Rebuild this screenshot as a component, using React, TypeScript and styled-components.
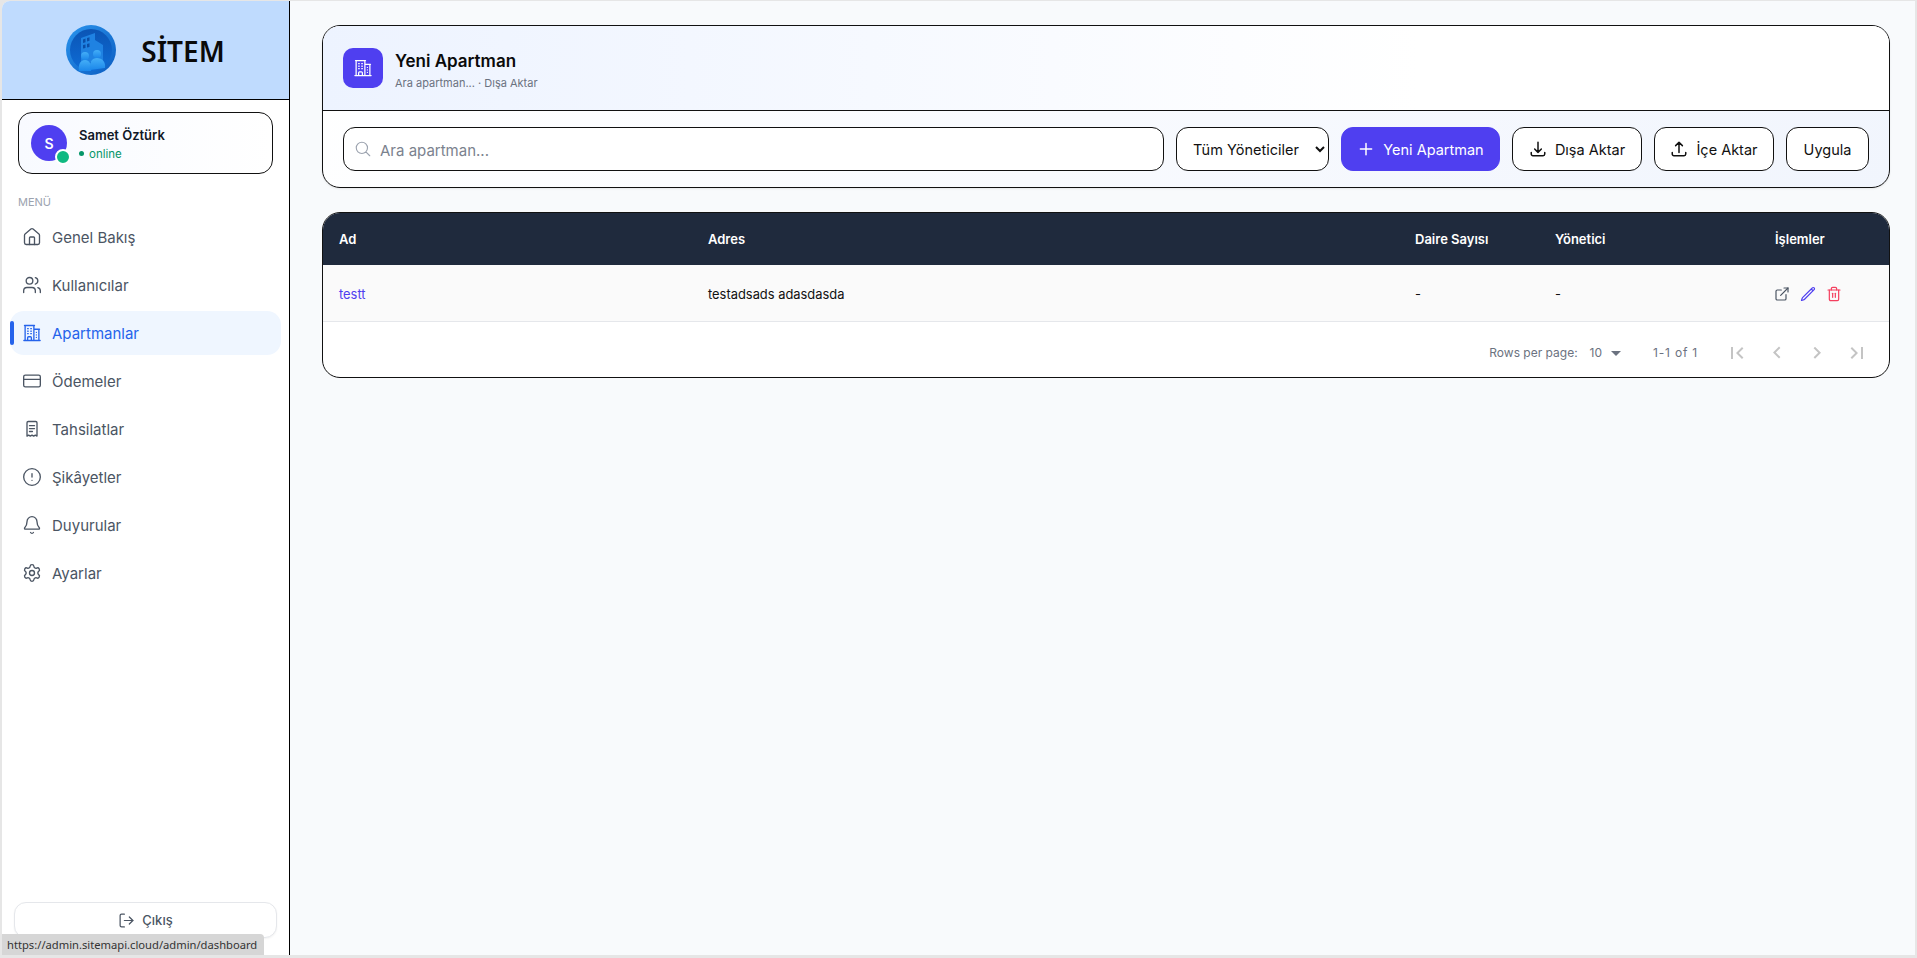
import React from 'react';
import styled, { createGlobalStyle } from 'styled-components';
import { Home, Users, CreditCard, CircleAlert, Bell, Settings, LogOut, ExternalLink, Trash2 } from 'lucide-react';
import {
	HiOutlineBuildingOffice2,
	HiOutlineMagnifyingGlass,
	HiOutlinePlus,
	HiOutlineArrowDownTray,
	HiOutlineArrowUpTray,
	HiOutlinePencil,
} from 'react-icons/hi2';

const GlobalStyle = createGlobalStyle`
	html, body {
		margin: 0;
		height: 100%;
		background: #e6e6e6;
	}
	* {
		box-sizing: border-box;
	}
	body {
		font-family: Inter, 'Noto Sans', sans-serif;
		color: #111827;
		overflow: hidden;
	}
`;

const Shell = styled.div`
	position: relative;
	display: flex;
	height: 958px;
	padding: 1px 2px 3px;
`;

const Sidebar = styled.aside`
	width: 288px;
	flex: none;
	display: flex;
	flex-direction: column;
	background: #fff;
	border-right: 1px solid #000;
	border-top-left-radius: 8px;
	overflow: hidden;
`;

const Brand = styled.div`
	height: 99px;
	flex: none;
	display: flex;
	align-items: center;
	justify-content: center;
	gap: 25px;
	background: #bfdbfe;
	border-bottom: 1px solid #000;
`;

const BrandName = styled.div`
	font-family: 'Noto Sans', sans-serif;
	font-size: 28px;
	font-weight: 600;
	color: #0a0a0a;
	padding-top: 2px;
`;

const UserCard = styled.div`
	margin: 12px 16px 0;
	height: 62px;
	flex: none;
	display: flex;
	align-items: center;
	gap: 12px;
	padding: 0 12px;
	border: 1px solid #111;
	border-radius: 14px;
	background: linear-gradient(90deg, #f8faff, #fff);
`;

const Avatar = styled.div`
	position: relative;
	width: 36px;
	height: 36px;
	flex: none;
	display: flex;
	align-items: center;
	justify-content: center;
	border-radius: 50%;
	background: #4f3ff0;
	color: #fff;
	font-size: 14px;
	font-weight: 600;
`;

const OnlineDot = styled.span`
	position: absolute;
	right: -4px;
	bottom: -4px;
	width: 16px;
	height: 16px;
	border-radius: 50%;
	background: #10b981;
	border: 2px solid #fff;
`;

const UserText = styled.div`
	padding-top: 2px;
`;

const UserName = styled.div`
	font-size: 13px;
	font-weight: 600;
	color: #111827;
	line-height: 18px;
`;

const UserStatus = styled.div`
	display: flex;
	align-items: center;
	gap: 5px;
	font-size: 11.5px;
	color: #059669;
	line-height: 18px;
	margin-top: 1px;

	&:before {
		content: '';
		width: 5px;
		height: 5px;
		border-radius: 50%;
		background: #059669;
	}
`;

const MenuLabel = styled.div`
	margin: 21px 16px 0;
	font-size: 11px;
	line-height: 14px;
	color: #9ca3af;
`;

const Nav = styled.nav`
	display: flex;
	flex-direction: column;
	gap: 4px;
	margin-top: 6px;
	padding: 0 8px;
`;

const NavItem = styled.a<{ $active?: boolean }>`
	position: relative;
	height: 44px;
	display: flex;
	align-items: center;
	gap: 10px;
	padding-left: 12px;
	border-radius: 14px;
	font-size: 15px;
	color: ${(p) => (p.$active ? '#2563eb' : '#4b5563')};
	background: ${(p) => (p.$active ? '#eff6ff' : 'transparent')};

	svg {
		width: 20px;
		height: 20px;
		flex: none;
		stroke-width: 1.6;
	}

	${(p) =>
		p.$active &&
		`&:before {
			content: '';
			position: absolute;
			left: 0;
			top: 10px;
			bottom: 10px;
			width: 4px;
			border-radius: 2px;
			background: #2563eb;
		}`}
`;

const SideFooter = styled.div`
	margin-top: auto;
	padding: 0 12px 17px;
`;

const LogoutButton = styled.button`
	width: 100%;
	height: 36px;
	display: flex;
	align-items: center;
	justify-content: center;
	gap: 7px;
	background: #fff;
	border: 1px solid #e5e7eb;
	border-radius: 12px;
	box-shadow: 0 1px 2px rgba(0, 0, 0, 0.05);
	font: 500 13px Inter, sans-serif;
	color: #4b5563;

	svg {
		width: 17px;
		height: 17px;
		stroke-width: 1.75;
	}
`;

const StatusTip = styled.div`
	position: absolute;
	left: 2px;
	bottom: 3px;
	width: 262px;
	height: 21px;
	padding: 0 5px;
	display: flex;
	align-items: center;
	background: #d6d6d6;
	border-top-right-radius: 4px;
	font-family: 'Noto Sans', sans-serif;
	font-size: 11.2px;
	white-space: nowrap;
	color: #333;
`;

const Main = styled.main`
	flex: 1;
	min-width: 0;
	display: flex;
	flex-direction: column;
	gap: 24px;
	padding: 24px 25px 0 32px;
	background: #f8fafc;
`;

const Panel = styled.section`
	height: 163px;
	flex: none;
	display: flex;
	flex-direction: column;
	border: 1px solid #111;
	border-radius: 18px;
	overflow: hidden;
	background: linear-gradient(135deg, #fff, #f1f5fd);
	box-shadow: 0 1px 2px rgba(0, 0, 0, 0.08);
`;

const PanelHead = styled.div`
	height: 85px;
	flex: none;
	display: flex;
	align-items: center;
	gap: 12px;
	padding: 0 20px;
	background: linear-gradient(90deg, #edf3ff, #ffffff 70%);
	border-bottom: 1px solid #111;
`;

const HeadIcon = styled.div`
	width: 40px;
	height: 40px;
	display: flex;
	align-items: center;
	justify-content: center;
	border-radius: 10px;
	background: #4f3ff0;
	color: #fff;

	svg {
		width: 20px;
		height: 20px;
	}
`;

const HeadText = styled.div`
	padding-top: 4px;
`;

const Title = styled.div`
	font-size: 17px;
	font-weight: 600;
	line-height: 22px;
	color: #0a0a0a;
`;

const Subtitle = styled.div`
	font-size: 11px;
	line-height: 16px;
	margin-top: 3px;
	color: #6b7280;
`;

const Toolbar = styled.div`
	flex: 1;
	display: flex;
	align-items: center;
	gap: 12px;
	padding: 0 20px;
`;

const SearchBox = styled.label`
	flex: 1;
	height: 44px;
	display: flex;
	align-items: center;
	gap: 6px;
	padding: 0 10px;
	background: #fff;
	border: 1px solid #111;
	border-radius: 12px;
	color: #9ca3af;

	svg {
		width: 18px;
		height: 18px;
		flex: none;
	}
`;

const SearchInput = styled.input`
	flex: 1;
	border: none;
	outline: none;
	background: none;
	padding-top: 3px;
	font: 15px Inter, sans-serif;

	&::placeholder {
		color: #7b828e;
	}
`;

const Select = styled.select`
	width: 153px;
	height: 44px;
	flex: none;
	padding: 0 12px;
	background: #fff;
	border: 1px solid #111;
	border-radius: 12px;
	font: 14.5px Inter, sans-serif;
	color: #111;
`;

const Button = styled.button<{ $primary?: boolean; $width: number }>`
	width: ${(p) => p.$width}px;
	height: 44px;
	flex: none;
	display: flex;
	align-items: center;
	justify-content: center;
	gap: 8px;
	padding: 0;
	border-radius: 12px;
	border: 1px solid ${(p) => (p.$primary ? '#4f3ff0' : '#111')};
	background: ${(p) => (p.$primary ? '#4f3ff0' : '#fff')};
	color: ${(p) => (p.$primary ? '#fff' : '#111')};
	font: 400 14.5px Inter, sans-serif;

	svg {
		width: 18px;
		height: 18px;
		stroke-width: 2;
	}
`;

const TableCard = styled.section`
	height: 166px;
	flex: none;
	display: flex;
	flex-direction: column;
	border: 1px solid #111;
	border-radius: 18px;
	overflow: hidden;
	background: #fff;
`;

const Row = styled.div`
	display: grid;
	grid-template-columns: 369px 707px 140px 220px 130px;
	align-items: center;
`;

const HeadRow = styled(Row)`
	height: 52px;
	background: #1f2a3d;
	color: #fff;
	font-size: 13px;
	font-weight: 600;
`;

const BodyRow = styled(Row)`
	height: 57px;
	padding-top: 2px;
	background: #fafafa;
	border-bottom: 1px solid #e5e7eb;
	font-size: 12.9px;
	color: #111;
`;

const Cell = styled.div`
	padding-left: 16px;
`;

const NameLink = styled.a`
	color: #4f3ff0;
`;

const Actions = styled.div`
	display: flex;
	align-items: center;
	gap: 10px;
	padding-left: 15px;

	svg {
		width: 16px;
		height: 16px;
		stroke-width: 1.8;
	}
`;

const Pager = styled.div`
	flex: 1;
	display: flex;
	align-items: center;
	justify-content: flex-end;
	padding: 6px 20px 0 0;
	font-size: 12px;
	color: #6b7280;
`;

const PageSize = styled.div`
	display: flex;
	align-items: center;
	gap: 2px;
	margin: 0 25px 0 12px;

	svg {
		width: 24px;
		height: 24px;
		fill: #6b7280;
	}
`;

const RangeText = styled.span`
	letter-spacing: 0.8px;
`;

const PagerButtons = styled.div`
	display: flex;
	gap: 16px;
	margin-left: 27px;

	svg {
		display: block;
		width: 24px;
		height: 24px;
		fill: #c4c4c4;
	}
`;

function ReceiptIcon() {
	return (
		<svg viewBox="0 0 24 24" fill="none" stroke="currentColor" strokeLinecap="round" strokeLinejoin="round">
			<path d="M6 20.5V4.5a1.5 1.5 0 0 1 1.5-1.5h9A1.5 1.5 0 0 1 18 4.5v16l-2-1.2-2 1.2-2-1.2-2 1.2-2-1.2z" />
			<path d="M9 8h6M9 11.5h6M9 15h3.5" />
		</svg>
	);
}

const NAV_ITEMS = [
	{ label: 'Genel Bakış', icon: Home },
	{ label: 'Kullanıcılar', icon: Users },
	{ label: 'Apartmanlar', icon: HiOutlineBuildingOffice2, active: true },
	{ label: 'Ödemeler', icon: CreditCard },
	{ label: 'Tahsilatlar', icon: ReceiptIcon },
	{ label: 'Şikâyetler', icon: CircleAlert },
	{ label: 'Duyurular', icon: Bell },
	{ label: 'Ayarlar', icon: Settings },
];

const PAGER_PATHS = [
	'M18.41 16.59L13.82 12l4.59-4.59L17 6l-6 6 6 6zM6 6h2v12H6z',
	'M15.41 16.09l-4.58-4.59 4.58-4.59L14 5.5l-6 6 6 6z',
	'M8.59 16.34l4.58-4.59-4.58-4.59L10 5.75l6 6-6 6z',
	'M5.59 7.41L10.18 12l-4.59 4.59L7 18l6-6-6-6zM16 6h2v12h-2z',
];

function Logo() {
	return (
		<svg width="50" height="50" viewBox="0 0 50 50">
			<defs>
				<linearGradient id="ring" x1="0" y1="0" x2="1" y2="1">
					<stop offset="0" stopColor="#2a95ee" />
					<stop offset="1" stopColor="#0b5cc0" />
				</linearGradient>
				<linearGradient id="disc" x1="0" y1="0" x2="0" y2="1">
					<stop offset="0" stopColor="#0b55b5" />
					<stop offset="1" stopColor="#0e6cd6" />
				</linearGradient>
				<linearGradient id="figure" x1="0" y1="0" x2="0" y2="1">
					<stop offset="0" stopColor="#44aef7" />
					<stop offset="1" stopColor="#1b87ea" />
				</linearGradient>
			</defs>
			<circle cx="25" cy="25" r="25" fill="url(#ring)" />
			<circle cx="25" cy="25" r="21" fill="url(#disc)" />
			<path d="M15 37V13l14-5v7l8 5v17z" fill="#1f82e2" />
			<path
				d="M17 14.5l2.5-.9v3.6l-2.5.7zM21 13.1l2.5-.9v3.6l-2.5.7zM17 20l2.5-.6v3.6l-2.5.5zM21 18.9l2.5-.6v3.6l-2.5.5z"
				fill="#0a4ea8"
			/>
			<circle cx="19" cy="31" r="4" fill="url(#figure)" />
			<circle cx="31" cy="29" r="4" fill="url(#figure)" />
			<path d="M13 46c-1-6 1-11 6-11s7 5 6 11z" fill="url(#figure)" />
			<path d="M24 45c-1-8 2-12 7-12s9 4 8 10z" fill="url(#figure)" />
		</svg>
	);
}

export default function App() {
	return (
		<>
			<GlobalStyle />
			<Shell>
				<Sidebar>
					<Brand>
						<Logo />
						<BrandName>SİTEM</BrandName>
					</Brand>
					<UserCard>
						<Avatar>
							S
							<OnlineDot />
						</Avatar>
						<UserText>
							<UserName>Samet Öztürk</UserName>
							<UserStatus>online</UserStatus>
						</UserText>
					</UserCard>
					<MenuLabel>MENÜ</MenuLabel>
					<Nav>
						{NAV_ITEMS.map((item) => (
							<NavItem key={item.label} $active={item.active}>
								<item.icon />
								{item.label}
							</NavItem>
						))}
					</Nav>
					<SideFooter>
						<LogoutButton>
							<LogOut />
							Çıkış
						</LogoutButton>
					</SideFooter>
				</Sidebar>
				<Main>
					<Panel>
						<PanelHead>
							<HeadIcon>
								<HiOutlineBuildingOffice2 />
							</HeadIcon>
							<HeadText>
								<Title>Yeni Apartman</Title>
								<Subtitle>Ara apartman... · Dışa Aktar</Subtitle>
							</HeadText>
						</PanelHead>
						<Toolbar>
							<SearchBox>
								<HiOutlineMagnifyingGlass />
								<SearchInput placeholder="Ara apartman..." />
							</SearchBox>
							<Select defaultValue="all">
								<option value="all">Tüm Yöneticiler</option>
							</Select>
							<Button $primary $width={159}>
								<HiOutlinePlus />
								Yeni Apartman
							</Button>
							<Button $width={130}>
								<HiOutlineArrowDownTray />
								Dışa Aktar
							</Button>
							<Button $width={120}>
								<HiOutlineArrowUpTray />
								İçe Aktar
							</Button>
							<Button $width={83}>Uygula</Button>
						</Toolbar>
					</Panel>
					<TableCard>
						<HeadRow>
							<Cell>Ad</Cell>
							<Cell>Adres</Cell>
							<Cell>Daire Sayısı</Cell>
							<Cell>Yönetici</Cell>
							<Cell>İşlemler</Cell>
						</HeadRow>
						<BodyRow>
							<Cell>
								<NameLink>testt</NameLink>
							</Cell>
							<Cell>testadsads adasdasda</Cell>
							<Cell>-</Cell>
							<Cell>-</Cell>
							<Actions>
								<ExternalLink color="#4b5563" />
								<HiOutlinePencil color="#4f3ff0" />
								<Trash2 color="#f43f5e" />
							</Actions>
						</BodyRow>
						<Pager>
							Rows per page:
							<PageSize>
								10
								<svg viewBox="0 0 24 24">
									<path d="M7 10l5 5 5-5z" />
								</svg>
							</PageSize>
							<RangeText>1-1 of 1</RangeText>
							<PagerButtons>
								{PAGER_PATHS.map((d) => (
									<svg key={d} viewBox="0 0 24 24">
										<path d={d} />
									</svg>
								))}
							</PagerButtons>
						</Pager>
					</TableCard>
				</Main>
				<StatusTip>https://admin.sitemapi.cloud/admin/dashboard</StatusTip>
			</Shell>
		</>
	);
}
